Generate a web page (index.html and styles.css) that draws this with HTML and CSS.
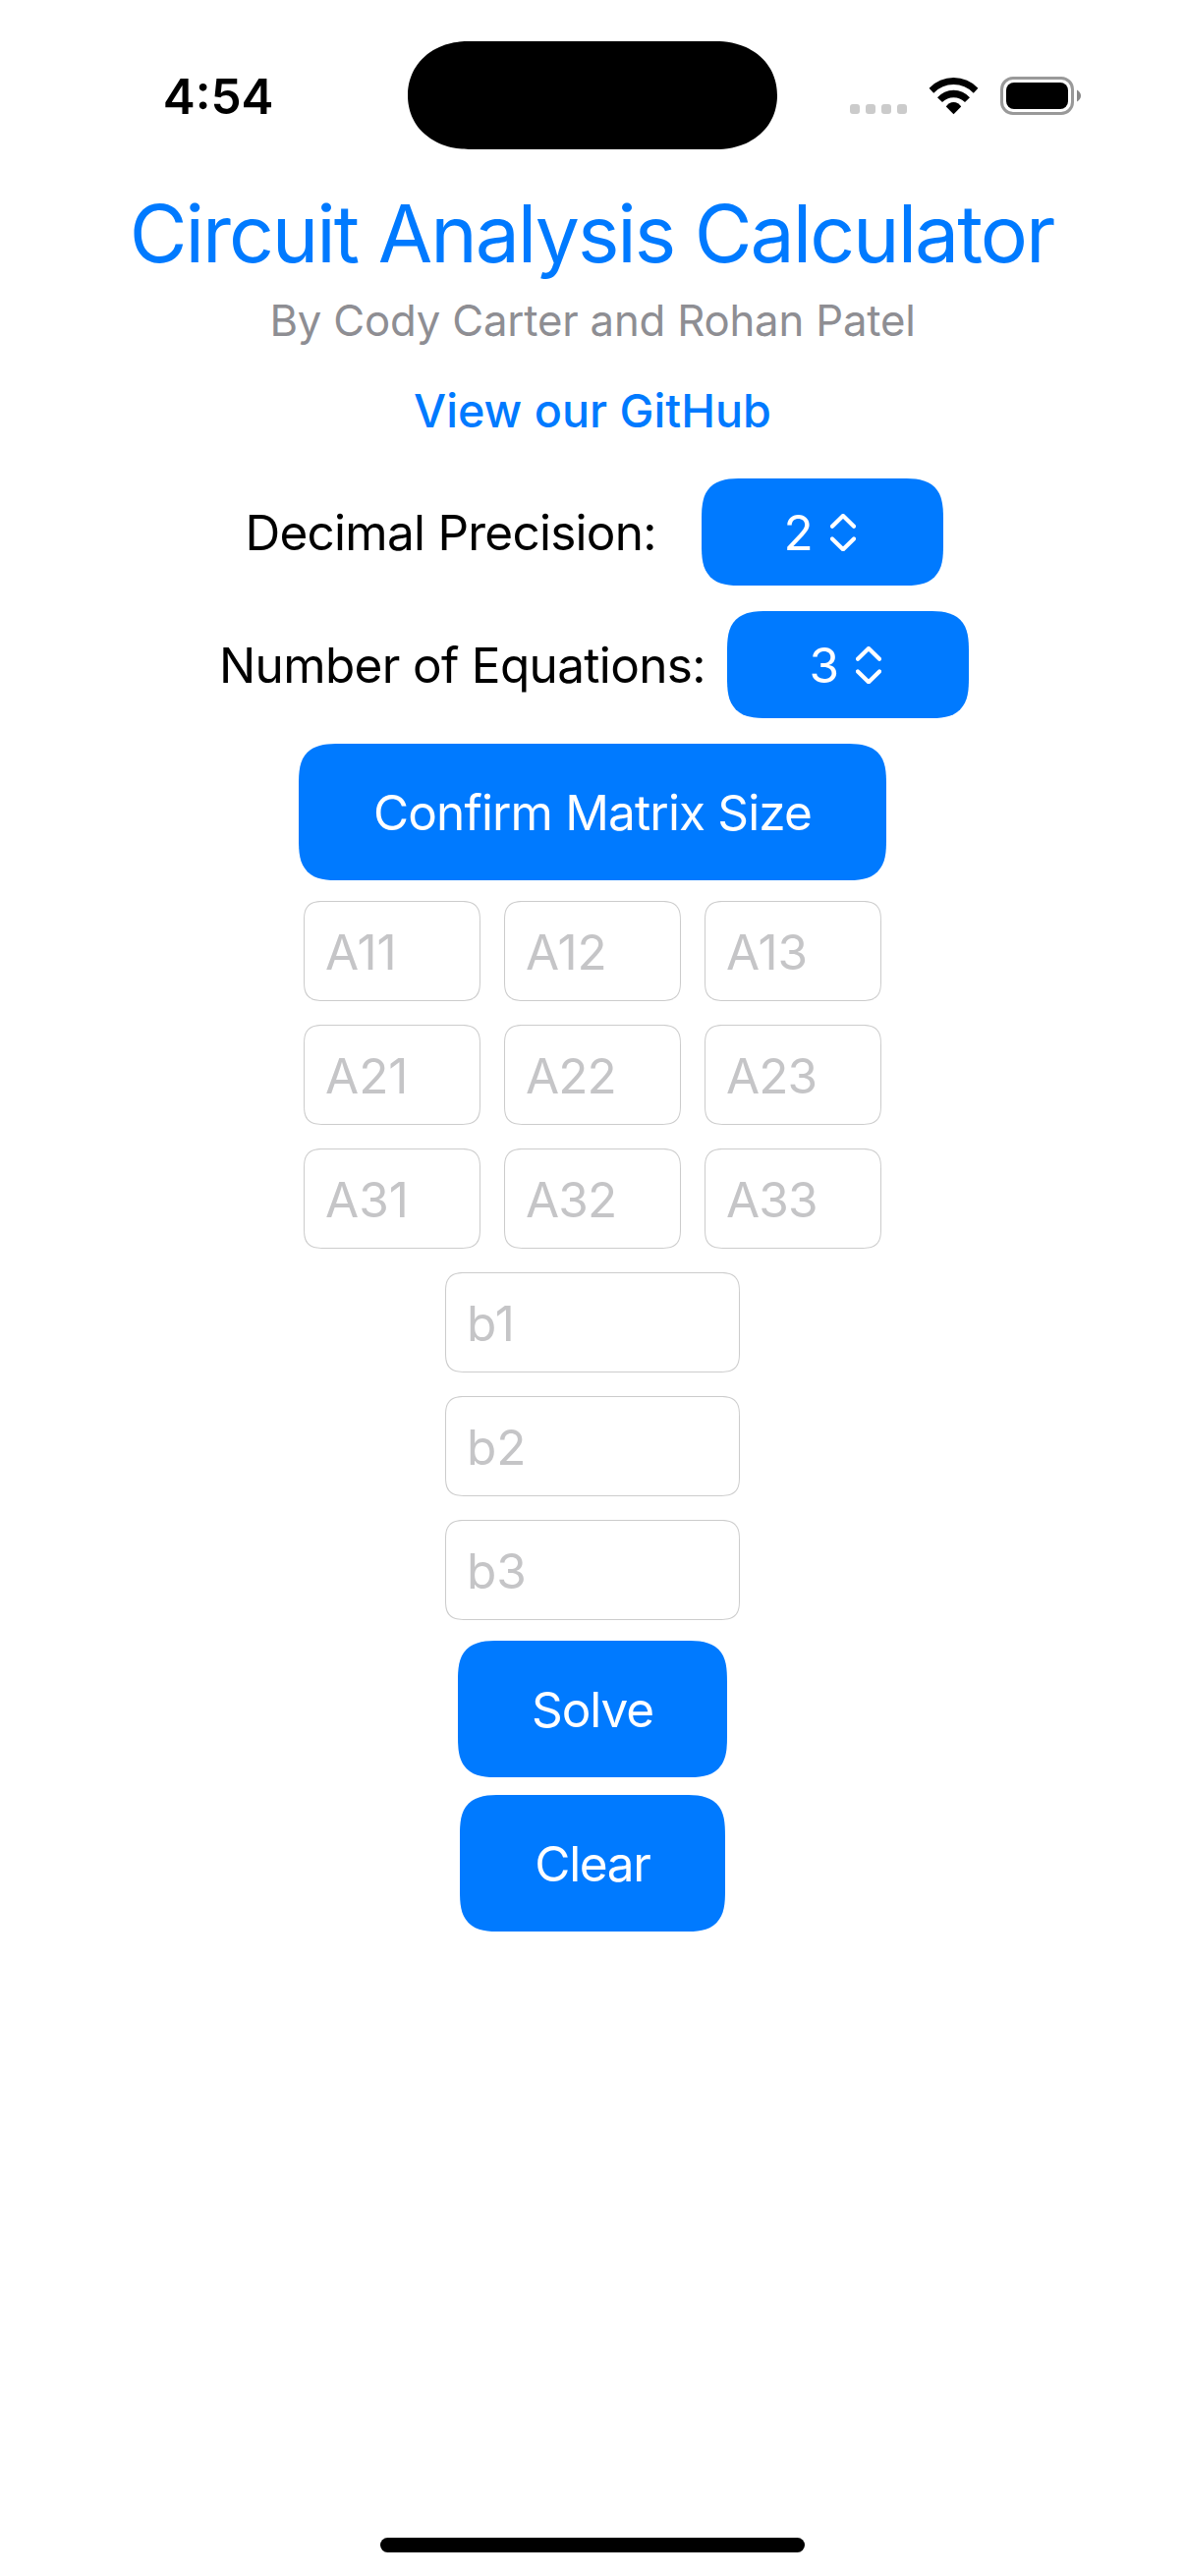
FILE: index.html
```html
<!DOCTYPE html>
<html lang="en">
<head>
<meta charset="utf-8">
<meta name="viewport" content="width=device-width">
<title>Circuit Analysis Calculator</title>
<link rel="stylesheet" href="styles.css">
</head>
<body>
<header class="status">
  <div class="clock">4:54</div>
  <div class="island"></div>
  <div class="indicators">
    <div class="signal"><i></i><i></i><i></i><i></i></div>
    <svg class="wifi" width="51" height="38" viewBox="0 0 51 38">
      <path d="M.6 10.7A34.5 34.5 0 0 1 50.4 10.7L45.8 15.7A28.2 28.2 0 0 0 5.2 15.7Z"/>
      <path d="M9 20.3A21.7 21.7 0 0 1 42 20.3L37 25A16.4 16.4 0 0 0 14 25Z"/>
      <path d="M17.8 29.4A9 9 0 0 1 33.2 29.4L25.5 37.2Z"/>
    </svg>
    <svg class="battery" width="83" height="39" viewBox="0 0 83 39">
      <rect x="1.5" y="1.5" width="72" height="36" rx="11.5" fill="none" stroke="#999" stroke-width="3"/>
      <rect x="6" y="6" width="63" height="27" rx="8"/>
      <path d="M78 13.5Q82 16 82 19.5T78 25.5Z" fill="#888"/>
    </svg>
  </div>
</header>

<main class="page">
  <h1 class="title">Circuit Analysis Calculator</h1>
  <p class="byline">By Cody Carter and Rohan Patel</p>
  <a class="link">View our GitHub</a>

  <div class="setting setting-precision">
    <span class="label label-precision">Decimal Precision:</span>
    <div class="picker">2<svg class="chevrons" width="26" height="38" viewBox="0 0 26 38"><path d="M2 12.8L13 1.9L24 12.8M2 25.4L13 36.3L24 25.4"/></svg></div>
  </div>
  <div class="setting setting-count">
    <span class="label label-count">Number of Equations:</span>
    <div class="picker">3<svg class="chevrons" width="26" height="38" viewBox="0 0 26 38"><path d="M2 12.8L13 1.9L24 12.8M2 25.4L13 36.3L24 25.4"/></svg></div>
  </div>

  <div class="button confirm">Confirm Matrix Size</div>

  <div class="matrix">
    <div class="field">A11</div><div class="field">A12</div><div class="field">A13</div>
    <div class="field">A21</div><div class="field tight">A22</div><div class="field tight">A23</div>
    <div class="field">A31</div><div class="field tight">A32</div><div class="field tight">A33</div>
  </div>
  <div class="vector">
    <div class="field">b1</div>
    <div class="field">b2</div>
    <div class="field">b3</div>
  </div>

  <div class="button solve">Solve</div>
  <div class="button clear">Clear</div>
</main>

<footer class="home"></footer>
</body>
</html>
```
FILE: styles.css
```css
* { box-sizing: border-box; }

body {
  margin: 0;
  width: 1206px;
  height: 2622px;
  display: flex;
  flex-direction: column;
  background: #fff;
  color: #000;
  font: 400 49.5px/60px Inter, "Liberation Sans", sans-serif;
  white-space: nowrap;
}

/* Status bar */
.status {
  display: grid;
  grid-template-columns: 415px 376px 415px;
  height: 187px;
  padding-top: 42px;
  align-items: start;
}
.clock {
  padding-left: 165.7px;
  line-height: 112px;
  font-weight: 600;
}
.island {
  height: 110px;
  background: #000;
  border-radius: 62px / 55px;
  corner-shape: superellipse(1.08);
}
.indicators {
  display: flex;
  align-items: flex-start;
  padding: 36px 0 0 74px;
}
.signal {
  display: flex;
  gap: 6px;
  margin: 28px 22px 0 0;
}
.signal i {
  width: 10px;
  height: 10px;
  border-radius: 3px;
  background: #cbcbcb;
}
.wifi { margin: 1px 22px 0 0; }

/* Content */
.page {
  display: flex;
  flex-direction: column;
  align-items: center;
}
.title {
  margin: 0;
  padding-right: 2px;
  color: #007aff;
  font-size: 80.5px;
  font-weight: 400;
  line-height: 101px;
  letter-spacing: -2.05px;
}
.byline {
  margin: 0;
  color: #8e8e93;
  font-size: 43.7px;
  line-height: 78px;
  letter-spacing: -0.19px;
}
.link {
  color: #007aff;
  font-size: 46.7px;
  font-weight: 500;
  line-height: 104px;
  margin-bottom: 17px;
}

.setting {
  display: flex;
  justify-content: space-between;
  align-items: center;
  height: 109px;
  margin-bottom: 26px;
}
.setting-precision { width: 714px; padding-left: 3.5px; }
.setting-count { width: 766px; padding-left: 3px; }
.label-precision { letter-spacing: -0.75px; }
.label-count { letter-spacing: -0.67px; }

.picker, .button {
  background: #007aff;
  color: #fff;
  border-radius: 42px;
  corner-shape: superellipse(1.55);
}
.picker {
  display: flex;
  align-items: center;
  width: 246px;
  height: 109px;
  padding-left: 83.5px;
}
.chevrons {
  margin: 0 auto 0 17px;
  fill: none;
  stroke: #fff;
  stroke-width: 4.2;
  stroke-linecap: round;
  stroke-linejoin: round;
}

.button {
  height: 139px;
  line-height: 140px;
  text-align: center;
}
.confirm { width: 598px; margin-bottom: 21px; letter-spacing: -0.85px; }
.solve { width: 274px; margin-bottom: 18px; letter-spacing: -1.06px; }
.clear { width: 270px; letter-spacing: -1.3px; }

.matrix {
  display: grid;
  grid-template-columns: repeat(3, 180px);
  gap: 24px;
  margin-bottom: 24px;
}
.vector {
  display: grid;
  grid-template-columns: 300px;
  gap: 24px;
  margin-bottom: 21px;
}
.field {
  height: 102px;
  padding-left: 21px;
  border: 1px solid #ccc;
  border-radius: 21px;
  corner-shape: superellipse(1.55);
  color: #c5c5c7;
  line-height: 102px;
}
.tight { letter-spacing: -0.9px; }

/* Home indicator */
.home {
  width: 432px;
  height: 15px;
  margin: auto auto 24px;
  border-radius: 8px;
  background: #000;
}
```
